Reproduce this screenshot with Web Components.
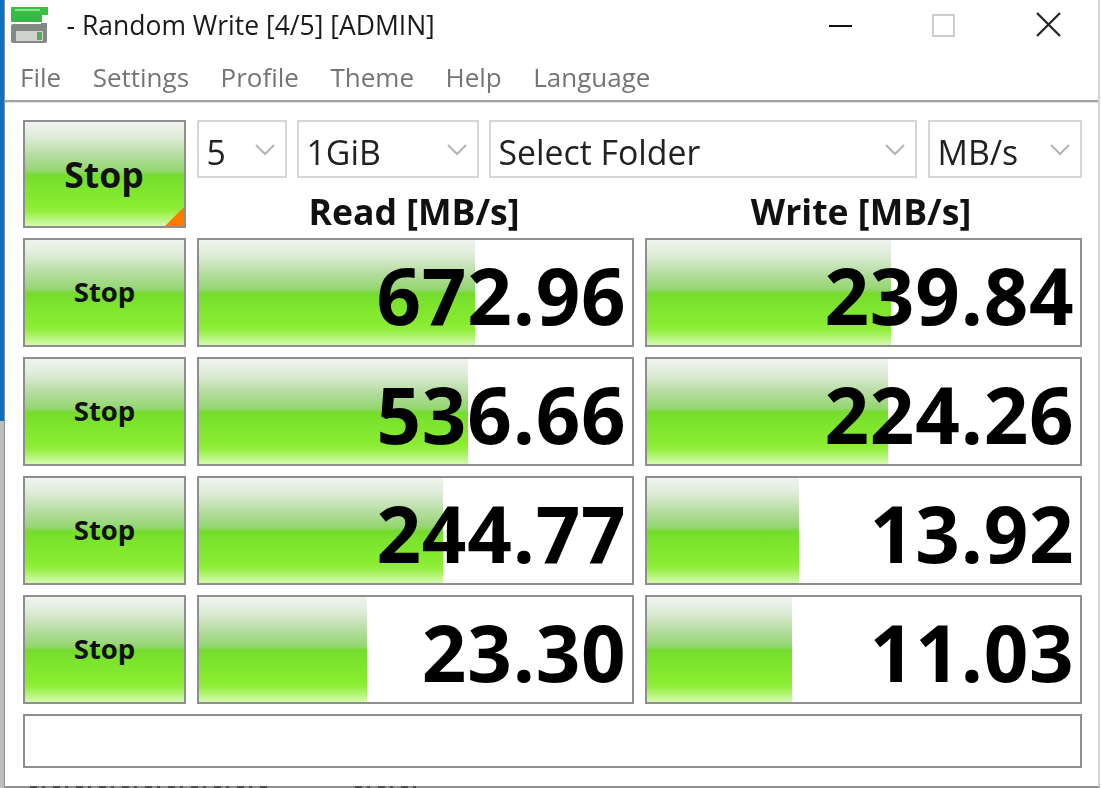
<!DOCTYPE html>
<html>
<head>
<meta charset="utf-8">
<style>
  html, body { margin: 0; height: 100%; background: #fff; overflow: hidden; }
</style>
</head>
<body>
<cdm-window>
  <cdm-titlebar slot="title">- Random Write [4/5] [ADMIN]</cdm-titlebar>
  <cdm-menu slot="menu"></cdm-menu>
  <cdm-button big>Stop</cdm-button>
  <cdm-toolbar></cdm-toolbar>
  <cdm-button>Stop</cdm-button>
  <cdm-meter fill="276">672.96</cdm-meter>
  <cdm-meter fill="244">239.84</cdm-meter>
  <cdm-button>Stop</cdm-button>
  <cdm-meter fill="269">536.66</cdm-meter>
  <cdm-meter fill="241">224.26</cdm-meter>
  <cdm-button>Stop</cdm-button>
  <cdm-meter fill="244">244.77</cdm-meter>
  <cdm-meter fill="152">13.92</cdm-meter>
  <cdm-button>Stop</cdm-button>
  <cdm-meter fill="168">23.30</cdm-meter>
  <cdm-meter fill="145">11.03</cdm-meter>
  <cdm-status></cdm-status>
</cdm-window>
<script>
const GREEN = `linear-gradient(180deg, #f1f4f0 0%, #dfecd9 14%, #b2dc9c 33%, #94d670 47%, #74dc2c 51%, #7de42e 62%, #88ec30 80%, #94ef40 86%, #d4fab0 100%)`;

class CdmWindow extends HTMLElement {
  constructor() {
    super();
    this.attachShadow({mode: "open"}).innerHTML = `
    <style>
      :host { display: block; width: 1102px; height: 788px; background: #fff;
        font-family: "Open Sans", "Noto Sans", sans-serif; position: relative; overflow: hidden; }
      .frame { height: 788px; box-sizing: border-box; margin: 0 2px 0 4px; border-left: 1.5px solid #8e8e8e; border-right: 2px solid #d4d4d4; border-bottom: 2px solid #8f8f8f; filter: blur(0.6px); }
      .head { border-bottom: 2px solid #a4a4a4; box-shadow: 0 1px 0 #e2e2e2; height: 102px; box-sizing: border-box; }
      .grid { display: grid; grid-template-columns: 163px 437px 437px; grid-template-rows: 108px 109px 109px 109px 109px 54px; column-gap: 11px; row-gap: 10px; padding: 18px 0 0 17.5px; }
      .edge { position: absolute; left: 0; top: 0; width: 4px; height: 788px; background: #bdbdbd; }
      .accent { position: absolute; left: 0; top: 0; width: 4px; height: 421px; background: #0a72c4; }
      /* tops of the letters of the window behind, cut off by the frame */
      .behind { position: absolute; top: 786px; height: 2px; opacity: .6; filter: blur(.6px);
        background: repeating-linear-gradient(90deg, #222 0 7px, transparent 7px 12px, #222 12px 15px, transparent 15px 23px); }
    </style>
    <div class="edge"></div>
    <div class="accent"></div>
    <div class="frame">
      <div class="head"><slot name="title"></slot><slot name="menu"></slot></div>
      <div class="grid"><slot></slot></div>
    </div>
    <div class="behind" style="left:30px;width:240px"></div>
    <div class="behind" style="left:355px;width:65px"></div>`;
  }
}

class CdmTitlebar extends HTMLElement {
  constructor() {
    super();
    this.attachShadow({mode: "open"}).innerHTML = `
    <style>
      :host { display: flex; align-items: center; height: 50px; font-size: 26.5px; color: #1a1a1a; }
      svg { display: block; flex: none; }
      .logo { margin-left: 4.5px; }
      .text { margin-left: 17px; flex: 1; white-space: nowrap; }
      .min { margin: 2px 80px 0 0; }
      .max { margin-right: 81px; }
      .close { margin: -1px 37px 0 0; }
    </style>
    <svg class="logo" width="40" height="40" viewBox="0 0 40 40">
      <rect x="1" y="2" width="37" height="8" fill="#35bf45"/>
      <rect x="1" y="10" width="31" height="7" fill="#3ab548"/>
      <rect x="5" y="4" width="25" height="2" fill="#8be08f"/>
      <path d="M3 19h28v-1h6v18a2 2 0 0 1-2 2H3a2 2 0 0 1-2-2V21a2 2 0 0 1 2-2z" fill="#858785"/>
      <rect x="6" y="26" width="27" height="10" fill="#cfd2cf"/>
      <rect x="27" y="27" width="5" height="8" fill="#5ea85e"/>
    </svg>
    <span class="text"><slot></slot></span>
    <svg class="min" width="23" height="2" viewBox="0 0 23 2"><rect width="23" height="2" fill="#111"/></svg>
    <svg class="max" width="23" height="23" viewBox="0 0 23 23"><rect x="1" y="1" width="21" height="21" fill="none" stroke="#cdcdcd" stroke-width="2"/></svg>
    <svg class="close" width="25" height="25" viewBox="0 0 25 25"><path d="M1 1L24 24M24 1L1 24" stroke="#222" stroke-width="2.2" fill="none"/></svg>`;
  }
}

class CdmMenu extends HTMLElement {
  constructor() {
    super();
    const items = ["File", "Settings", "Profile", "Theme", "Help", "Language"];
    this.attachShadow({mode: "open"}).innerHTML = `
    <style>
      :host { display: flex; height: 50px; align-items: center; padding: 3px 0 0 15px; gap: 31.5px; font-size: 26px; color: #757575; box-sizing: border-box; }
    </style>
    ${items.map(i => `<span>${i}</span>`).join("")}`;
  }
}

class CdmButton extends HTMLElement {
  constructor() {
    super();
    this.attachShadow({mode: "open"}).innerHTML = `
    <style>
      :host { display: flex; align-items: center; justify-content: center; box-sizing: border-box; position: relative;
        border: 2px solid #8e8e8e; background: ${GREEN}; font-weight: 700; font-size: 27.5px; color: #111; padding: 0 0 2px 1px; }
      :host([big]) { font-size: 35.5px; padding: 0; }
      .tri { display: none; position: absolute; right: 0; bottom: 0; width: 0; height: 0; border-left: 19px solid transparent; border-bottom: 19px solid #ff7a00; }
      :host([big]) .tri { display: block; }
    </style>
    <slot></slot><span class="tri"></span>`;
  }
}

class CdmSelect extends HTMLElement {
  constructor() {
    super();
    this.attachShadow({mode: "open"}).innerHTML = `
    <style>
      :host { display: flex; align-items: center; box-sizing: border-box; height: 58px; border: 2px solid #d6d6d6; font-size: 33.8px; color: #222; padding: 0 10px 0 8px; }
      span { flex: 1; white-space: nowrap; padding-top: 6px; line-height: 1.2; }
      svg { display: block; flex: none; margin-top: 2px; }
    </style>
    <span><slot></slot></span>
    <svg width="20" height="12" viewBox="0 0 20 12"><path d="M1 1l9 9 9-9" fill="none" stroke="#b4b4b4" stroke-width="2"/></svg>`;
  }
}

class CdmToolbar extends HTMLElement {
  constructor() {
    super();
    this.attachShadow({mode: "open"}).innerHTML = `
    <style>
      :host { display: flex; flex-direction: column; grid-column: span 2; }
      .selects { display: flex; gap: 10px; }
      .heads { display: grid; grid-template-columns: 437px 437px; column-gap: 11px; }
      .h { font-weight: 700; font-size: 35.6px; color: #111; text-align: center; line-height: 1; padding-top: 16px; white-space: nowrap; }
      .r { padding-right: 2px; }
      .w { padding-right: 4px; }
    </style>
    <div class="selects">
      <cdm-select style="width:90px">5</cdm-select>
      <cdm-select style="width:182px">1GiB</cdm-select>
      <cdm-select style="width:428px">Select Folder</cdm-select>
      <cdm-select style="width:154px;margin-left:1px">MB/s</cdm-select>
    </div>
    <div class="heads"><div class="h r">Read [MB/s]</div><div class="h w">Write [MB/s]</div></div>`;
  }
}

class CdmMeter extends HTMLElement {
  constructor() {
    super();
    this.attachShadow({mode: "open"}).innerHTML = `
    <style>
      :host { display: flex; align-items: center; justify-content: flex-end; box-sizing: border-box; position: relative; border: 2px solid #8e8e8e; background: #fff; font-weight: 700; font-size: 78px; letter-spacing: 0.8px; color: #000; padding: 4px 5px 0 0; }
      .bar { position: absolute; left: 0; top: 0; bottom: 0; background: ${GREEN}; }
      span { position: relative; line-height: 1; }
    </style>
    <div class="bar"></div><span><slot></slot></span>`;
  }
  connectedCallback() {
    this.shadowRoot.querySelector(".bar").style.width = this.getAttribute("fill") + "px";
  }
}

class CdmStatus extends HTMLElement {
  constructor() {
    super();
    this.attachShadow({mode: "open"}).innerHTML = `
    <style>
      :host { display: block; grid-column: 1 / -1; box-sizing: border-box; border: 2px solid #8e8e8e; background: #fff; }
    </style>`;
  }
}

customElements.define("cdm-window", CdmWindow);
customElements.define("cdm-titlebar", CdmTitlebar);
customElements.define("cdm-menu", CdmMenu);
customElements.define("cdm-button", CdmButton);
customElements.define("cdm-select", CdmSelect);
customElements.define("cdm-toolbar", CdmToolbar);
customElements.define("cdm-meter", CdmMeter);
customElements.define("cdm-status", CdmStatus);
</script>
</body>
</html>
